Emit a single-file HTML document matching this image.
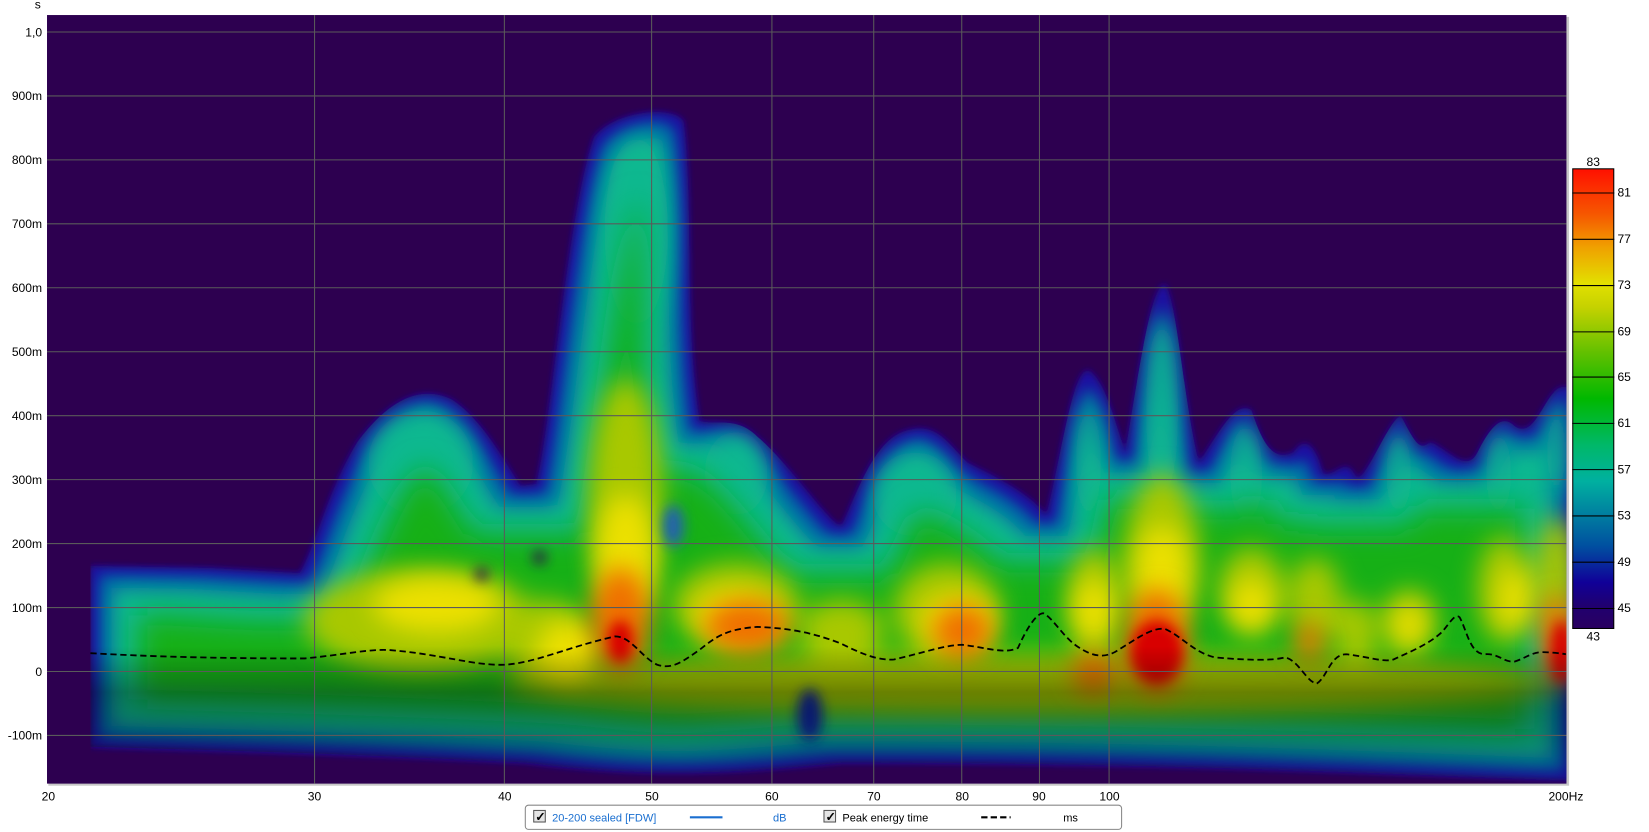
<!DOCTYPE html>
<html><head><meta charset="utf-8">
<style>
html,body{margin:0;padding:0;background:#fff;width:1649px;height:832px;overflow:hidden}
svg{display:block}
text{font-family:"Liberation Sans",Arial,sans-serif;font-size:11.5px;fill:#000}
</style></head>
<body>
<svg width="1649" height="832" viewBox="0 0 1568 791" preserveAspectRatio="none" xmlns="http://www.w3.org/2000/svg">
<defs>
  <clipPath id="plot"><rect x="86" y="14.3" width="1403.5" height="730.7"/></clipPath>
  <clipPath id="env"><path id="envp" d="M86,538 L200,540 L285,545 C300,520 310,470 340,420 C370,380 400,365 430,380 C460,400 480,440 495,462 L510,460 C525,400 540,200 565,130 C585,105 640,100 650,115 C660,200 650,300 665,400 C680,405 700,395 720,415 C750,440 790,500 800,500 C815,470 830,420 860,410 C890,400 900,420 920,440 C950,455 980,470 995,490 C1010,430 1020,350 1035,352 C1050,360 1060,400 1070,430 C1085,340 1095,270 1108,270 C1120,290 1125,380 1140,440 C1160,410 1175,380 1190,390 C1200,420 1210,440 1230,430 C1240,415 1250,420 1258,450 C1270,455 1280,430 1290,455 C1300,455 1320,400 1332,395 C1345,420 1350,430 1360,420 C1380,430 1395,450 1405,430 C1420,400 1430,395 1440,405 C1460,420 1470,370 1485,368 L1495,368 L1495,742 C1300,735 1100,725 800,725 C700,735 620,740 500,725 C300,715 150,712 86,710 Z"/></clipPath>
  <filter id="f0" x="-0.1" y="-0.1" width="1.2" height="1.2"><feGaussianBlur stdDeviation="3"/></filter>
  <filter id="f1" x="-0.1" y="-0.1" width="1.2" height="1.2"><feMorphology operator="erode" radius="8"/><feGaussianBlur stdDeviation="6"/></filter>
  <filter id="f2" x="-0.1" y="-0.1" width="1.2" height="1.2"><feMorphology operator="erode" radius="20"/><feGaussianBlur stdDeviation="9"/></filter>
  <filter id="f3" x="-0.1" y="-0.1" width="1.2" height="1.2"><feMorphology operator="erode" radius="45"/><feGaussianBlur stdDeviation="14"/></filter>
  <filter id="bl" x="-0.5" y="-0.5" width="2" height="2"><feGaussianBlur stdDeviation="12"/></filter>
  <filter id="bs" x="-0.5" y="-0.5" width="2" height="2"><feGaussianBlur stdDeviation="6"/></filter>
  <linearGradient id="dark" x1="0" y1="0" x2="0" y2="1">
    <stop offset="0" stop-color="#000" stop-opacity="0"/>
    <stop offset="0.82" stop-color="#000" stop-opacity="0"/>
    <stop offset="0.88" stop-color="#000" stop-opacity="0.35"/>
    <stop offset="0.94" stop-color="#000" stop-opacity="0.25"/>
    <stop offset="1" stop-color="#000" stop-opacity="0.05"/>
  </linearGradient>
  <linearGradient id="cb" x1="0" y1="0" x2="0" y2="1">
    <stop offset="0" stop-color="#ff1000"/>
    <stop offset="0.1" stop-color="#f65800"/>
    <stop offset="0.17" stop-color="#f0a000"/>
    <stop offset="0.25" stop-color="#e2e000"/>
    <stop offset="0.3" stop-color="#c6d200"/>
    <stop offset="0.4" stop-color="#62c000"/>
    <stop offset="0.5" stop-color="#00b800"/>
    <stop offset="0.6" stop-color="#00b868"/>
    <stop offset="0.68" stop-color="#00b0a0"/>
    <stop offset="0.75" stop-color="#0080a0"/>
    <stop offset="0.82" stop-color="#0050a0"/>
    <stop offset="0.9" stop-color="#100098"/>
    <stop offset="0.95" stop-color="#200070"/>
    <stop offset="1" stop-color="#2a0060"/>
  </linearGradient>
</defs>

<rect x="46" y="16" width="1446" height="731" fill="#c8c8c8"/>
<rect x="44.7" y="14.3" width="1444.8" height="730.7" fill="#2d0050"/>

<g clip-path="url(#plot)">
  <use href="#envp" fill="#1a10a0" filter="url(#f0)"/>
  <use href="#envp" fill="#0060a8" filter="url(#f1)"/>
  <use href="#envp" fill="#10b890" filter="url(#f2)"/>
  <g clip-path="url(#env)">
    <g filter="url(#bl)" fill="#10b890">
      <ellipse cx="1035" cy="440" rx="12" ry="60"/>
      <ellipse cx="1105" cy="390" rx="15" ry="90"/>
      <ellipse cx="1185" cy="450" rx="15" ry="50"/>
      <ellipse cx="1330" cy="450" rx="12" ry="45"/>
      <ellipse cx="1425" cy="450" rx="12" ry="45"/>
      <ellipse cx="1480" cy="430" rx="10" ry="50"/>
      <ellipse cx="870" cy="470" rx="40" ry="40"/>
      <ellipse cx="700" cy="450" rx="30" ry="40"/>
      <ellipse cx="400" cy="440" rx="50" ry="50"/>
      <ellipse cx="605" cy="220" rx="30" ry="90"/>
    </g>
  </g>
  <use href="#envp" fill="#12b015" filter="url(#f3)"/>
  <g clip-path="url(#env)">
    <g filter="url(#bl)" fill="#a8c800">
      <ellipse cx="400" cy="590" rx="110" ry="50"/>
      <ellipse cx="595" cy="470" rx="35" ry="110"/>
      <ellipse cx="700" cy="575" rx="60" ry="40"/>
      <ellipse cx="900" cy="580" rx="50" ry="45"/>
      <ellipse cx="1040" cy="570" rx="25" ry="50"/>
      <ellipse cx="1105" cy="530" rx="35" ry="80"/>
      <ellipse cx="1190" cy="560" rx="30" ry="40"/>
      <ellipse cx="1250" cy="570" rx="25" ry="40"/>
      <ellipse cx="1340" cy="590" rx="25" ry="30"/>
      <ellipse cx="1430" cy="560" rx="25" ry="50"/>
      <ellipse cx="1480" cy="550" rx="20" ry="60"/>
      <ellipse cx="1290" cy="600" rx="20" ry="30"/>
      <ellipse cx="800" cy="600" rx="40" ry="30"/>
      <ellipse cx="980" cy="650" rx="500" ry="28"/>
      <ellipse cx="520" cy="610" rx="40" ry="40"/>
    </g>
    <g filter="url(#bl)" fill="#ece000">
      <ellipse cx="595" cy="530" rx="28" ry="60"/>
      <ellipse cx="415" cy="575" rx="60" ry="26"/>
      <ellipse cx="1040" cy="580" rx="18" ry="30"/>
      <ellipse cx="1105" cy="545" rx="25" ry="45"/>
      <ellipse cx="1190" cy="575" rx="20" ry="25"/>
      <ellipse cx="1440" cy="570" rx="15" ry="30"/>
      <ellipse cx="700" cy="585" rx="40" ry="25"/>
      <ellipse cx="910" cy="590" rx="35" ry="25"/>
      <ellipse cx="1340" cy="595" rx="15" ry="20"/>
      <ellipse cx="540" cy="620" rx="30" ry="30"/>
    </g>
    <g filter="url(#bl)" fill="#f07000">
      <ellipse cx="590" cy="590" rx="28" ry="50"/>
      <ellipse cx="710" cy="595" rx="40" ry="25"/>
      <ellipse cx="915" cy="600" rx="28" ry="25"/>
      <ellipse cx="1100" cy="610" rx="30" ry="50"/>
      <ellipse cx="1480" cy="610" rx="15" ry="45"/>
      <ellipse cx="1245" cy="610" rx="12" ry="20"/>
      <ellipse cx="1040" cy="640" rx="20" ry="20"/>
    </g>
    <g filter="url(#bs)" fill="#d80000">
      <ellipse cx="1100" cy="620" rx="25" ry="30"/>
      <ellipse cx="1485" cy="620" rx="10" ry="30"/>
      <ellipse cx="590" cy="610" rx="12" ry="20"/>
    </g>
    <g filter="url(#bs)">
      <circle cx="458" cy="546" r="6" fill="#2d0050"/>
      <circle cx="513" cy="530" r="6" fill="#2d0050"/>
      <ellipse cx="770" cy="680" rx="12" ry="25" fill="#1020a0"/>
      <ellipse cx="640" cy="500" rx="10" ry="20" fill="#2060b0"/>
    </g>
    <rect x="44" y="14" width="1450" height="732" fill="url(#dark)"/>
  </g>
</g>

<g stroke="#5a5a5a" stroke-width="1">
  <line x1="44.7" x2="1489.5" y1="30.4" y2="30.4"/>
  <line x1="44.7" x2="1489.5" y1="91.2" y2="91.2"/>
  <line x1="44.7" x2="1489.5" y1="152" y2="152"/>
  <line x1="44.7" x2="1489.5" y1="212.8" y2="212.8"/>
  <line x1="44.7" x2="1489.5" y1="273.6" y2="273.6"/>
  <line x1="44.7" x2="1489.5" y1="334.4" y2="334.4"/>
  <line x1="44.7" x2="1489.5" y1="395.2" y2="395.2"/>
  <line x1="44.7" x2="1489.5" y1="456" y2="456"/>
  <line x1="44.7" x2="1489.5" y1="516.8" y2="516.8"/>
  <line x1="44.7" x2="1489.5" y1="577.6" y2="577.6"/>
  <line x1="44.7" x2="1489.5" y1="638.4" y2="638.4"/>
  <line x1="44.7" x2="1489.5" y1="699.2" y2="699.2"/>
  <line y1="14.3" y2="745" x1="299.1" x2="299.1"/>
  <line y1="14.3" y2="745" x1="479.6" x2="479.6"/>
  <line y1="14.3" y2="745" x1="619.6" x2="619.6"/>
  <line y1="14.3" y2="745" x1="734" x2="734"/>
  <line y1="14.3" y2="745" x1="830.8" x2="830.8"/>
  <line y1="14.3" y2="745" x1="914.5" x2="914.5"/>
  <line y1="14.3" y2="745" x1="988.4" x2="988.4"/>
  <line y1="14.3" y2="745" x1="1054.6" x2="1054.6"/>
</g>

<path d="M86,621 C140,624 200,626 290,626 C330,622 350,617 370,618 C420,622 450,633 480,632 C510,630 540,615 585,605 C600,605 610,625 625,632 C640,637 650,628 665,618 C680,606 690,598 720,596 C745,597 770,600 800,612 C820,622 835,628 850,627 C880,620 900,613 915,613 C940,616 955,622 968,616 C975,600 985,583 992,583 C1002,588 1010,605 1025,615 C1040,625 1050,625 1060,620 C1080,608 1095,596 1108,598 C1125,606 1135,620 1155,625 C1190,628 1210,628 1222,625 C1235,628 1242,648 1252,650 C1262,644 1265,622 1280,622 C1300,624 1315,630 1325,627 C1340,620 1360,612 1372,600 C1380,590 1384,583 1388,587 C1395,600 1398,622 1412,622 C1425,621 1430,630 1440,629 C1450,626 1455,621 1465,620 C1475,620 1483,621 1489,622" fill="none" stroke="#000" stroke-width="1.7" stroke-dasharray="6,3.5"/>

<text x="33" y="8">s</text>
<g text-anchor="end">
  <text x="40" y="34.5">1,0</text>
  <text x="40" y="95.3">900m</text>
  <text x="40" y="156.1">800m</text>
  <text x="40" y="216.9">700m</text>
  <text x="40" y="277.7">600m</text>
  <text x="40" y="338.5">500m</text>
  <text x="40" y="399.3">400m</text>
  <text x="40" y="460.1">300m</text>
  <text x="40" y="520.9">200m</text>
  <text x="40" y="581.7">100m</text>
  <text x="40" y="642.5">0</text>
  <text x="40" y="703.3">-100m</text>
</g>
<g text-anchor="middle">
  <text x="46" y="761">20</text>
  <text x="299" y="761">30</text>
  <text x="480" y="761">40</text>
  <text x="620" y="761">50</text>
  <text x="734" y="761">60</text>
  <text x="831" y="761">70</text>
  <text x="915" y="761">80</text>
  <text x="988" y="761">90</text>
  <text x="1055" y="761">100</text>
  <text x="1489" y="761">200Hz</text>
</g>

<rect x="1495.5" y="160.5" width="39" height="437" fill="url(#cb)" stroke="#000" stroke-width="1"/>
<g stroke="#000" stroke-width="1">
  <line x1="1495" x2="1535" y1="183.5" y2="183.5"/>
  <line x1="1495" x2="1535" y1="227.5" y2="227.5"/>
  <line x1="1495" x2="1535" y1="271.5" y2="271.5"/>
  <line x1="1495" x2="1535" y1="315.5" y2="315.5"/>
  <line x1="1495" x2="1535" y1="358.5" y2="358.5"/>
  <line x1="1495" x2="1535" y1="402.5" y2="402.5"/>
  <line x1="1495" x2="1535" y1="446.5" y2="446.5"/>
  <line x1="1495" x2="1535" y1="490.5" y2="490.5"/>
  <line x1="1495" x2="1535" y1="534.5" y2="534.5"/>
  <line x1="1495" x2="1535" y1="578.5" y2="578.5"/>
</g>
<text x="1515" y="158" text-anchor="middle">83</text>
<text x="1515" y="609" text-anchor="middle">43</text>
<g>
  <text x="1538" y="187">81</text>
  <text x="1538" y="231">77</text>
  <text x="1538" y="275">73</text>
  <text x="1538" y="319">69</text>
  <text x="1538" y="362">65</text>
  <text x="1538" y="406">61</text>
  <text x="1538" y="450">57</text>
  <text x="1538" y="494">53</text>
  <text x="1538" y="538">49</text>
  <text x="1538" y="582">45</text>
</g>

<rect x="499.5" y="765.5" width="567" height="23" rx="3" fill="#fff" stroke="#888" stroke-width="1"/>
<rect x="507.5" y="770.5" width="11" height="11" fill="#e4e4e4" stroke="#555"/>
<text x="509" y="780.5" style="font-size:12px;font-weight:bold">✓</text>
<text x="525" y="781" style="fill:#1a6fd0;font-size:10.5px">20-200 sealed [FDW]</text>
<line x1="656" x2="687" y1="777" y2="777" stroke="#1a6fd0" stroke-width="2"/>
<text x="735" y="781" style="fill:#1a6fd0;font-size:10.5px">dB</text>
<rect x="783.5" y="770.5" width="11" height="11" fill="#e4e4e4" stroke="#555"/>
<text x="785" y="780.5" style="font-size:12px;font-weight:bold">✓</text>
<text x="801" y="781" style="font-size:10.5px">Peak energy time</text>
<line x1="933" x2="961" y1="777" y2="777" stroke="#000" stroke-width="2" stroke-dasharray="6,3"/>
<text x="1011" y="781" style="font-size:10.5px">ms</text>
</svg>
</body></html>
